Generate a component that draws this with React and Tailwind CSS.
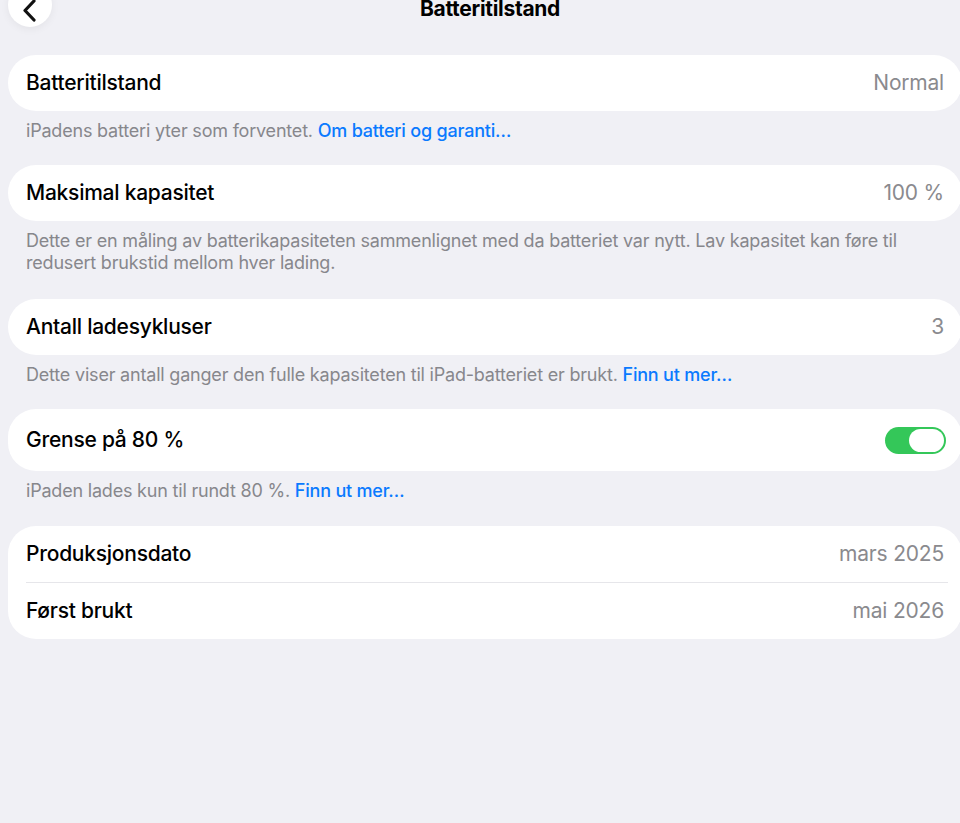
const font = { fontFamily: 'Inter, "Noto Sans", sans-serif' };

function Row({ label, value, children, tall }) {
  return (
    <div className={`flex items-center justify-between pl-[18px] pr-[18px] ${tall ? 'h-[62px]' : 'h-[56px]'}`}>
      <span className="text-[21px] font-medium tracking-[-0.25px] text-black">{label}</span>
      {value && <span className="text-[21px] text-[#8a8a8e] tracking-[-0.2px]">{value}</span>}
      {children}
    </div>
  );
}

function Card({ children }) {
  return <div className="ml-2 mr-[-2px] bg-white rounded-[28px] overflow-hidden">{children}</div>;
}

function Footer({ children }) {
  return (
    <p className="pl-[26px] pr-10 pt-[9px] text-[18px] leading-[22px] text-[#87878c] tracking-[-0.2px]">
      {children}
    </p>
  );
}

function Link({ children }) {
  return <span className="text-[#0a7aff] font-medium">{children}</span>;
}

function Toggle() {
  return (
    <div className="mr-[-2px] w-[61px] h-[27px] rounded-full bg-[#34c759] flex items-center justify-end p-[2px]">
      <div className="w-[35px] h-[23px] rounded-full bg-white" />
    </div>
  );
}

export default function App() {
  return (
    <div className="w-[960px] h-[823px] overflow-hidden bg-[#f0f0f5]" style={font}>
      <div className="relative h-[55px] flex justify-center pl-5">
        <div className="absolute left-[8px] top-[-17px] w-[44px] h-[44px] rounded-full bg-white shadow-[0_2px_8px_rgba(0,0,0,0.06)] flex items-center justify-center">
          <svg width="16" height="24" viewBox="0 0 16 24" className="mt-[12px]">
            <path d="M12 2 L3 11.5 L12 21" fill="none" stroke="#111" strokeWidth="3.2" strokeLinecap="round" strokeLinejoin="round" />
          </svg>
        </div>
        <h1 className="text-[21px] font-bold text-black leading-[21px] mt-[-2px] tracking-[-0.3px]">Batteritilstand</h1>
      </div>

      <Card>
        <Row label="Batteritilstand" value="Normal" />
      </Card>
      <Footer>
        iPadens batteri yter som forventet. <Link>Om batteri og garanti…</Link>
      </Footer>

      <div className="h-[23px]" />
      <Card>
        <Row label="Maksimal kapasitet" value="100 %" />
      </Card>
      <Footer>
        Dette er en måling av batterikapasiteten sammenlignet med da batteriet var nytt. Lav kapasitet kan føre til redusert brukstid mellom hver lading.
      </Footer>

      <div className="h-[25px]" />
      <Card>
        <Row label="Antall ladesykluser" value="3" />
      </Card>
      <Footer>
        Dette viser antall ganger den fulle kapasiteten til iPad-batteriet er brukt. <Link>Finn ut mer…</Link>
      </Footer>

      <div className="h-[23px]" />
      <Card>
        <Row label="Grense på 80 %" tall>
          <Toggle />
        </Row>
      </Card>
      <Footer>
        iPaden lades kun til rundt 80 %. <Link>Finn ut mer…</Link>
      </Footer>

      <div className="h-[24px]" />
      <Card>
        <Row label="Produksjonsdato" value="mars 2025" />
        <div className="ml-[18px] mr-[14px] h-px bg-[#e6e6ea]" />
        <Row label="Først brukt" value="mai 2026" />
      </Card>
    </div>
  );
}
